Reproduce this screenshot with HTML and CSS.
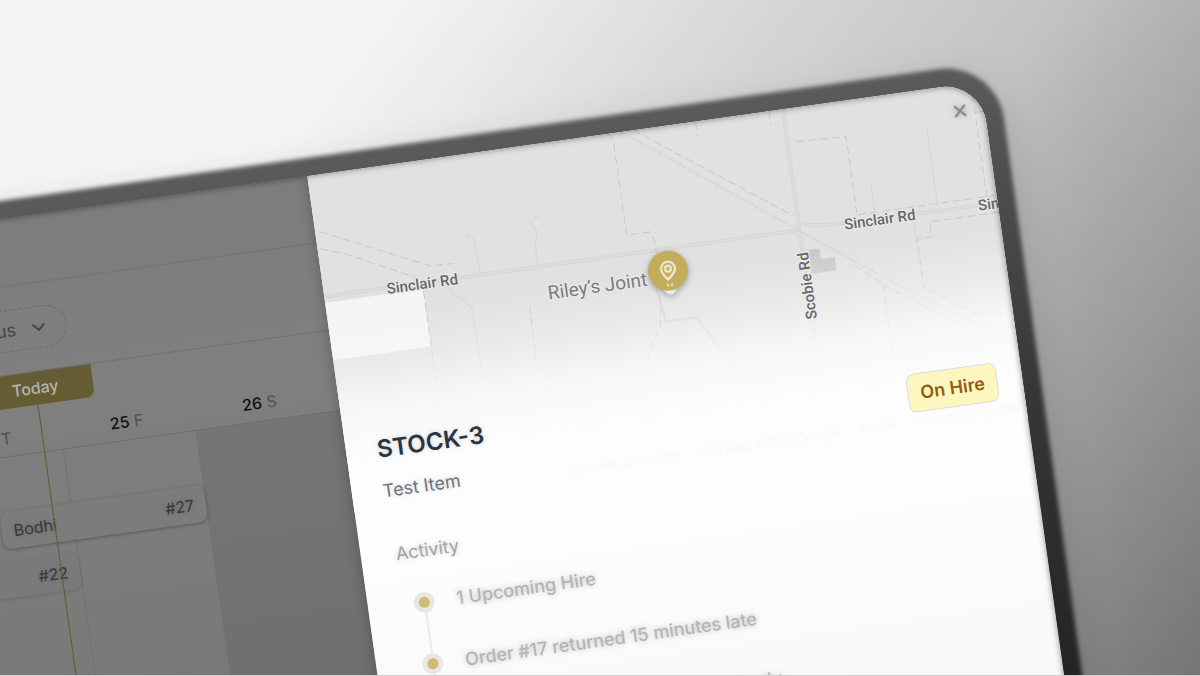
FILE: index.html
```
<!DOCTYPE html>
<html lang="en">
  <head>
    <meta charset="UTF-8" />
    <meta name="viewport" content="width=device-width, initial-scale=1.0" />
    <title>Stock item - STOCK-3</title>
    <link rel="stylesheet" href="styles.css" />
  </head>
  <body>
    <div class="stage">
      <div class="device">
        <div class="screen">
          <main class="planner">
            <header class="topbar"></header>
            <div class="toolbar">
              <button type="button" class="filter">
                Status
                <svg width="14" height="8" viewBox="0 0 14 8" aria-hidden="true">
                  <path d="M1 1l6 6 6-6" />
                </svg>
              </button>
            </div>
            <div class="days">
              <div class="day"><b>24</b> T</div>
              <div class="day"><b>25</b> F</div>
              <div class="day"><b>26</b> S</div>
              <div class="day"></div>
              <div class="today">Today</div>
            </div>
            <div class="timeline">
              <div class="column"></div>
              <div class="column"></div>
              <div class="column weekend"></div>
              <div class="column weekend"></div>
              <div class="bookings">
                <div class="booking"><span>Bodhi</span><span>#27</span></div>
                <div class="booking early"><span></span><span>#22</span></div>
              </div>
              <div class="nowLine"></div>
            </div>
          </main>

          <aside class="panel">
            <div class="map">
              <svg class="mapArt" viewBox="0 0 680 340" preserveAspectRatio="xMinYMin slice">
                <rect class="lot" x="0" y="128" width="99" height="58" />
                <path class="building" d="M486 143h11v11h14v13h-25z" />
                <g class="road">
                  <path d="M0 122H465Q474 122 480 126" />
                  <path d="M480 114Q490 121 521 121L680 123" />
                  <path d="M480 0V340" />
                </g>
                <g class="roadCore">
                  <path d="M0 122H465Q474 122 480 126" />
                  <path d="M480 114Q490 121 521 121L680 123" />
                  <path d="M480 0V340" />
                </g>
                <g class="lane">
                  <path d="M158 121L156 87 154 82 149 84V80L154 80" />
                  <path d="M216 120V100L220 87 214 78 223 72 224 68" />
                  <path d="M127 130V137L140 146 145 156 146 226" />
                  <path d="M557 86V115M620 37V118M594 128V150" />
                </g>
                <path class="drive" d="M330 160L335 194H366L390 240 414 259 437 273 450 301" />
                <path class="rail" d="M317 0L480 123 556 180 676 262" />
                <path class="sleepers" d="M317 0L480 123 556 180 676 262" />
                <g class="boundary">
                  <path d="M5 57L109 106 132 107" />
                  <path d="M3 74L28 83 94 116" />
                  <path d="M99 130V300" />
                  <path d="M202 160L201 212 208 232 215 275" />
                  <path d="M304 0L308 7V103H331L335 113V150L329 197 315 220 309 246 264 294" />
                  <path d="M329 0L476 107" />
                  <path d="M530 164L555 188 630 241V275M555 188V281" />
                  <path d="M392 0V15M466 0V14" />
                  <path d="M489 34L539 36V113M540 115L680 115" />
                  <path d="M670 0V116M670 30H680" />
                  <path d="M680 132H610V147H595V196L647 232H680" />
                </g>
                <rect class="fade" x="0" y="0" width="680" height="340" fill="url(#mapFade)" />
                <defs>
                  <linearGradient id="mapFade" x1="0" y1="0" x2="0" y2="1">
                    <stop offset="0.42" stop-color="#fdfdfd" stop-opacity="0" />
                    <stop offset="0.56" stop-color="#fdfdfd" stop-opacity="0.3" />
                    <stop offset="0.7" stop-color="#fdfdfd" stop-opacity="0.8" />
                    <stop offset="0.86" stop-color="#fdfdfd" stop-opacity="1" />
                  </linearGradient>
                </defs>
                <text class="roadName" x="63" y="128">Sinclair Rd</text>
                <text class="roadName" x="525" y="128">Sinclair Rd</text>
                <text class="roadName" x="660" y="128">Sinclair Rd</text>
                <text class="roadName" transform="translate(485 212) rotate(-90)">Scobie Rd</text>
                <text class="placeName" x="222" y="156">Riley’s Joint</text>
                <g class="credits">
                  <text x="216" y="332">Keyboard shortcuts</text>
                  <text x="347" y="332">Map Data ©2025 Google</text>
                  <text x="512" y="332">Terms</text>
                  <text x="566" y="332">Report a map error</text>
                </g>
              </svg>
              <svg class="pin" width="42" height="50" viewBox="0 0 42 50" aria-label="Item location">
                <path class="pinTip" d="M13 39h16l-5 5q-3 2-6 0z" />
                <circle class="pinDisc" cx="21" cy="21" r="20" />
                <g transform="rotate(8 21 21)">
                  <path class="pinIcon" d="M21 30c-4-4-7-7-7-11a7 7 0 0 1 14 0c0 4-3 7-7 11z" />
                  <circle class="pinIcon" cx="21" cy="19" r="3" />
                </g>
                <path class="pinMark" d="M18 33v4l3-1zM24 33v4l-3-1z" />
              </svg>
            </div>
            <button type="button" class="close" aria-label="Close">
              <svg width="13" height="13" viewBox="0 0 13 13" aria-hidden="true">
                <path d="M1 1l11 11M12 1L1 12" />
              </svg>
            </button>

            <div class="summary">
              <div class="item">
                <h1>STOCK-3</h1>
                <p>Test Item</p>
              </div>
              <span class="status">On Hire</span>
            </div>

            <section class="activity">
              <h2>Activity</h2>
              <ul>
                <li>1 Upcoming Hire</li>
                <li>Order #17 returned 15 minutes late</li>
                <li>Order #16 returned 20 minutes early</li>
              </ul>
            </section>
          </aside>
        </div>
      </div>
    </div>
  </body>
</html>
```
FILE: styles.css
```
*,
*::before,
*::after {
  box-sizing: border-box;
}
body {
  margin: 0;
  font-family: Inter, Arial, sans-serif;
}
.stage {
  height: 100vh;
  overflow: hidden;
  padding-top: 61px;
  border-bottom: 1px solid #d0d0d0;
  background: linear-gradient(
    128deg,
    #f5f5f5 22%,
    #ebebeb 30%,
    #dadada 42%,
    #c2c2c2 62%,
    #b2b2b2 69%,
    #999999 82%,
    #757575 100%
  );
}

/* device */
.device {
  position: relative;
  width: calc(83% + 300px);
  height: 900px;
  margin-left: -300px;
  padding: 18px;
  transform: rotate(-8deg);
  transform-origin: top right;
}
.device::before {
  content: '';
  position: absolute;
  inset: 0;
  border-radius: 58px;
  background: linear-gradient(#5b5b5b, #555555 60px, #454545 200px, #363636 340px, #242424 620px);
  box-shadow: 0 10px 40px rgba(0, 0, 0, 0.12);
  filter: blur(2px);
}
.screen {
  position: relative;
  display: flex;
  height: 100%;
  overflow: hidden;
  border-radius: 42px;
  background: #7f7f7f;
}
.screen::after {
  content: '';
  position: absolute;
  inset: 0;
  border-radius: 42px;
  box-shadow: inset 0 0 6px rgba(0, 0, 0, 0.45);
  pointer-events: none;
}

/* planner */
.planner {
  display: flex;
  flex-direction: column;
  flex: 1;
  min-width: 0;
  background: linear-gradient(#7d7d7d, #7f7f7f 200px, #757575 640px);
}
.topbar {
  height: 68px;
  border-bottom: 1px solid #747474;
}
.toolbar {
  display: flex;
  justify-content: flex-end;
  align-items: center;
  height: 88px;
  padding-right: 259px;
  border-bottom: 1px solid #707070;
}
.filter {
  display: flex;
  align-items: center;
  gap: 16px;
  height: 42px;
  padding: 0 20px;
  border: 1px dashed #6a6a6a;
  border-radius: 21px;
  background: none;
  color: #444444;
  font: 18px Inter, Arial, sans-serif;
}
.filter svg {
  fill: none;
  stroke: #444444;
  stroke-width: 2;
}
.days,
.timeline {
  position: relative;
  display: grid;
  grid-template-columns: repeat(3, 134px) 12px;
  justify-content: end;
}
.days {
  height: 81px;
  border-bottom: 1px solid #6e6e6e;
}
.day {
  padding-top: 50px;
  text-align: center;
  font-size: 16px;
  line-height: 24px;
  color: #505050;
}
.day b {
  font-weight: 500;
  color: #111111;
}
.today {
  position: absolute;
  top: 0;
  right: 241px;
  width: 116px;
  height: 33px;
  border-radius: 0 0 8px 8px;
  background: #665c33;
  color: #b4b3ae;
  font-size: 16px;
  font-weight: 500;
  line-height: 33px;
  text-align: center;
}
.timeline {
  flex: 1;
}
.column {
  border-left: 1px solid #727272;
}
.weekend {
  background: rgba(0, 0, 0, 0.07);
}
.bookings {
  position: absolute;
  top: 54px;
  right: 146px;
  display: flex;
  flex-direction: column;
  gap: 12px;
}
.booking {
  display: flex;
  justify-content: space-between;
  align-items: center;
  width: 206px;
  height: 37px;
  padding: 0 12px;
  border-radius: 8px;
  background: #7c7c7c;
  box-shadow: 0 1px 4px rgba(0, 0, 0, 0.3);
  color: #363636;
  font-size: 16px;
  text-shadow: 0 0 5px rgba(0, 0, 0, 0.2);
}
.early {
  margin-left: -134px;
  margin-right: 134px;
  background: #7a7a7a;
  box-shadow: 0 1px 4px rgba(0, 0, 0, 0.15);
}
.nowLine {
  position: absolute;
  top: -48px;
  bottom: 0;
  right: 298px;
  width: 1px;
  background: #665a2a;
}

/* item panel */
.panel {
  position: relative;
  flex: 0 0 680px;
  background: linear-gradient(#fdfdfd 400px, #f8f8f8 620px);
  box-shadow: 0 0 14px rgba(0, 0, 0, 0.25);
}
.map {
  position: absolute;
  top: 0;
  left: 0;
  right: 0;
  height: 340px;
  background: linear-gradient(#e1e1e1 300px, #fdfdfd 330px);
}
.mapArt {
  display: block;
  width: 100%;
  height: 100%;
  fill: none;
}
.lot {
  fill: #f4f4f4;
}
.building {
  fill: #c9c9c9;
}
.road {
  stroke: #d6d6d6;
  stroke-width: 4;
}
.roadCore {
  stroke: #dddddd;
  stroke-width: 2;
}
.lane {
  stroke: #d5d5d5;
  stroke-width: 1;
}
.drive {
  stroke: #d2d2d2;
  stroke-width: 2;
}
.rail {
  stroke: #d4d4d4;
  stroke-width: 1;
}
.sleepers {
  stroke: #d6d6d6;
  stroke-width: 6;
  stroke-dasharray: 1 21;
}
.boundary {
  stroke: #c9c9c9;
  stroke-width: 1;
  stroke-dasharray: 8 4;
}
.roadName,
.placeName {
  font-family: Roboto, Arial, sans-serif;
  paint-order: stroke;
  stroke: #ececec;
  stroke-width: 2;
}
.roadName {
  font-size: 15px;
  font-weight: 500;
  fill: #666666;
}
.placeName {
  font-size: 19px;
  fill: #7a7a7a;
}
.credits {
  font: 13px Roboto, Arial, sans-serif;
  fill: #f9f9f9;
}
.pin {
  position: absolute;
  top: 123px;
  left: 323px;
  filter: drop-shadow(0 2px 3px rgba(0, 0, 0, 0.3));
}
.pinDisc {
  fill: #c2ad5c;
}
.pinTip {
  fill: #eeeeee;
}
.pinIcon {
  fill: none;
  stroke: #f3efdd;
  stroke-width: 2;
}
.pinMark {
  fill: #eae2c0;
}
.close {
  position: absolute;
  top: 16px;
  right: 14px;
  display: flex;
  padding: 4px;
  border: none;
  background: none;
}
.close svg {
  fill: none;
  stroke: #868686;
  stroke-width: 2;
  filter: drop-shadow(0 0 3px rgba(0, 0, 0, 0.3));
}
.summary {
  position: relative;
  display: flex;
  justify-content: space-between;
  align-items: center;
  padding: 265px 25px 0 31px;
}
.item h1 {
  margin: 0 0 12px;
  font-size: 24px;
  font-weight: 600;
  line-height: 32px;
  color: #2b3445;
  text-shadow: 0 0 5px rgba(43, 52, 69, 0.2);
}
.item p {
  margin: 0;
  font-size: 18px;
  line-height: 28px;
  color: #6b7482;
  text-shadow: 0 0 5px rgba(43, 52, 69, 0.2);
}
.status {
  margin-bottom: 4px;
  padding: 6px 12px;
  border: 1px solid #dcdcdc;
  border-radius: 8px;
  background: #fef6bf;
  color: #955a12;
  font-size: 18px;
  font-weight: 600;
  line-height: 25px;
}
.activity {
  padding: 36px 35px 0;
}
.activity h2 {
  margin: 0 0 7px;
  font-size: 18px;
  font-weight: 400;
  line-height: 28px;
  color: #a3a3a5;
  text-shadow: 0 0 5px rgba(0, 0, 0, 0.2);
}
.activity ul {
  margin: 0;
  padding: 0 0 0 11px;
  list-style: none;
}
.activity li {
  position: relative;
  padding-left: 43px;
  font-size: 18px;
  font-weight: 500;
  line-height: 62px;
  color: #b4b4b8;
  text-shadow: 0 0 6px rgba(0, 0, 0, 0.25);
}
.activity li::before {
  content: '';
  position: absolute;
  top: 20px;
  left: 0;
  z-index: 1;
  width: 21px;
  height: 21px;
  border: 5px solid #e9e7df;
  border-radius: 50%;
  background: #cdbc76;
}
.activity li + li::after {
  content: '';
  position: absolute;
  top: -31px;
  left: 10px;
  width: 2px;
  height: 62px;
  background: #e9ecec;
}
```
